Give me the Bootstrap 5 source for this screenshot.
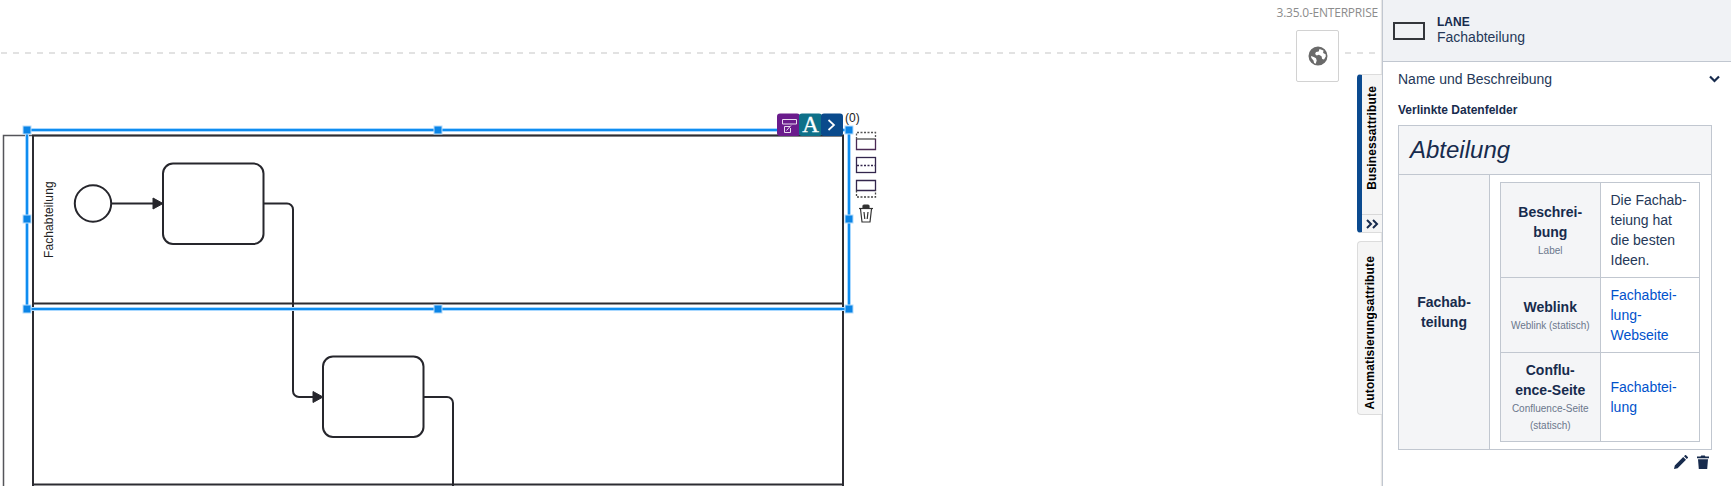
<!DOCTYPE html>
<html lang="de">
<head>
  <meta charset="UTF-8">
  <title>Fachabteilung</title>
  <link href="https://cdn.jsdelivr.net/npm/bootstrap@5.3.0/dist/css/bootstrap.min.css" rel="stylesheet">
  <style>
    html, body { height: 486px; overflow: hidden; background: #fff; }
    body { font-family: "Liberation Sans", Arial, sans-serif; font-size: 14px; line-height: 20px; color: #172b4d; }

    .app-shell { height: 486px; }

    /* canvas */
    .canvas-area { position: relative; }
    .diagram { position: absolute; left: 0; top: 0; width: 1382px; height: 486px; }
    .diagram text { font-family: "Liberation Sans", Arial, sans-serif; }

    .canvas-tools { position: absolute; right: 0; top: 0; bottom: 0; width: 110px; }
    .version-label { font-family: "Open Sans", sans-serif; font-size: 12px; letter-spacing: -.22px; line-height: 16px; color: #8c8c8c; margin: 5px 4px 0 0; white-space: nowrap; }
    .globe-btn { width: 43px; height: 52px; margin: 9px 43px 0 0; background: #fff; border: 1px solid #d2d2d2; border-radius: 2px; }

    .side-tabs { margin-top: -8px; width: 25px; gap: 8px; }
    .side-tab { width: 25px; background: #f5f5f5; border: 1px solid #dcdcdc; border-right: 0; border-radius: 4px 0 0 4px; color: #000; font-size: 12px; font-weight: 700; }
    .side-tab.is-active { height: 159px; border-left: 5px solid #0b4a8f; }
    .side-tab.is-plain { height: 174px; padding-top: 9px; }
    .tab-label { writing-mode: vertical-rl; transform: rotate(180deg); line-height: 14px; white-space: nowrap; letter-spacing: .14px; }
    .tab-main { padding-bottom: 13px; }
    .tab-toggle { height: 18px; border-top: 1px solid #d8d8d8; }

    /* right panel */
    .side-panel { width: 349px; border-left: 1px solid #c1c7d0; box-shadow: -1px 0 1px #e6e6e6; background: #fff; }
    .panel-head { height: 62px; background: #f0f2f5; border-bottom: 1px solid #c1c7d0; padding: 0 0 1px 10px; gap: 12px; }
    .lane-glyph { width: 32px; height: 18px; border: 2px solid #33363b; margin-top: 1px; }
    .head-type { font-size: 12px; font-weight: 700; line-height: 15px; }
    .head-name { font-size: 14px; line-height: 15px; color: #253858; }

    .panel-body { padding: 7px 19px 0 15px; }
    .section-title { color: #253858; height: 20px; }
    .section-chevron { margin-right: -8px; }
    .linked-title { font-size: 12px; font-weight: 700; line-height: 16px; margin: 13px 0 7px; }

    .field-table { --bs-table-bg: transparent; --bs-table-color: #253858; --bs-table-border-color: #c1c7d0; table-layout: fixed; margin: 0; }
    .outer-fields { width: 314px; }
    .inner-fields { width: 200px; }
    .field-table > tbody > tr > th,
    .field-table > tbody > tr > td { padding: 7px 10px; border: 1px solid #c1c7d0; vertical-align: middle; font-weight: 400; }
    .field-table > tbody > tr > .cell-shaded { background: #f4f5f7; text-align: center; font-weight: 700; color: #172b4d; padding-left: 2px; padding-right: 2px; }
    .field-table > tbody > tr > .cell-title { background: #f4f5f7; font-size: 24px; font-style: italic; font-weight: 400; line-height: 32px; padding: 8px 11px; height: 49px; color: #172b4d; }
    .field-table > tbody > tr > .cell-holder { padding: 7px 11px 7px 10px; }
    .field-sub { display: block; font-size: 10px; font-weight: 400; line-height: 17px; color: #6b778c; white-space: nowrap; }
    .field-link { color: #0052cc; text-decoration: none; }

    .row-actions { gap: 9px; margin-top: 5px; padding-right: 3px; }
  </style>
</head>
<body>
<div class="app-shell d-flex">

  <!-- Diagram canvas -->
  <div class="canvas-area flex-grow-1">
    <svg class="diagram" viewBox="0 0 1382 486" fill="none">
      <line x1="1" y1="53" x2="1376" y2="53" stroke="#e2e2e2" stroke-width="2" stroke-dasharray="6 6"/>

      <!-- pool and lanes -->
      <g stroke="#2c2c32" stroke-width="2">
        <path d="M3.5 486V135.5H843V486" stroke="#55555a" stroke-width="1.5"/>
        <path d="M33 486V135.5H843V486"/>
        <path d="M33 303.5H843"/>
        <path d="M33 484.5H843"/>
      </g>
      <text transform="translate(52.5 258) rotate(-90)" font-size="12" letter-spacing=".1" fill="#222">Fachabteilung</text>

      <!-- shapes -->
      <g stroke="#26262c" stroke-width="2">
        <circle cx="93" cy="203.5" r="18.2"/>
        <rect x="163" y="163.5" width="100.5" height="80.5" rx="10"/>
        <rect x="323" y="356.5" width="100.5" height="80.5" rx="10"/>
        <path d="M111 203.5H154"/>
        <path d="M263.5 203.5H287a6 6 0 0 1 6 6V391a6 6 0 0 0 6 6H314"/>
        <path d="M423.5 397H447a6 6 0 0 1 6 6V486"/>
      </g>
      <path d="M153 198V209L163 203.5Z M313 391.5V402.5L323 397Z" fill="#26262c" stroke="#26262c" stroke-width="1"/>

      <!-- selection frame -->
      <rect x="27" y="130" width="822" height="179" stroke="#a9d8ff" stroke-width="4"/>
      <rect x="27" y="130" width="822" height="179" stroke="#0f8df0" stroke-width="2"/>
      <g fill="#0a84e6" stroke="#b5dcfb" stroke-width="1">
        <rect x="23" y="126" width="8" height="8"/>
        <rect x="434" y="126" width="8" height="8"/>
        <rect x="845" y="126" width="8" height="8"/>
        <rect x="23" y="215" width="8" height="8"/>
        <rect x="845" y="215" width="8" height="8"/>
        <rect x="23" y="305" width="8" height="8"/>
        <rect x="434" y="305" width="8" height="8"/>
        <rect x="845" y="305" width="8" height="8"/>
      </g>

      <!-- context pad -->
      <rect x="777" y="113.5" width="23" height="22.5" rx="3" fill="#6a1b8c"/>
      <rect x="799" y="113.5" width="23" height="22.5" rx="3" fill="#0e7089"/>
      <rect x="821" y="113.5" width="22" height="22.5" rx="3" fill="#0a4a8c"/>
      <g stroke="#e9dcef" stroke-width="1">
        <path d="M782.5 119.5H796.5V124H782.5Z"/>
        <path d="M790 126.5H784.5V132.5H790.5V128"/>
        <path d="M786.5 130.5L791 125.5"/>
      </g>
      <text x="810.5" y="132" text-anchor="middle" font-size="23" fill="#fff" stroke="#fff" stroke-width=".3" style="font-family:'Liberation Serif',serif">A</text>
      <path d="M828.5 120L834 125L828.5 130" stroke="#fff" stroke-width="1.7"/>
      <text x="845" y="122" font-size="12" fill="#222">(0)</text>

      <!-- lane actions -->
      <g stroke-width="1.3">
        <path d="M856.5 139V132.5H875.5V139" stroke="#555" stroke-dasharray="2 1.5"/>
        <path d="M856.5 139H875.5" stroke="#666" stroke-width="1.5"/>
        <path d="M856.5 139V149.5H875.5V139" stroke="#4b2a55"/>
        <rect x="856.5" y="157.5" width="19" height="15" stroke="#33264d"/>
        <path d="M857 165.5H875" stroke="#33264d" stroke-dasharray="2 1.5"/>
        <path d="M856.5 190.5V180.5H875.5V190.5Z" stroke="#33264d"/>
        <path d="M856.5 190.5V197H875.5V190.5" stroke="#444" stroke-dasharray="2 1.5"/>
      </g>
      <g stroke="#333" stroke-width="1.2">
        <path d="M859 208.5H873"/>
        <path d="M863 208V206a1 1 0 0 1 1-1H868a1 1 0 0 1 1 1V208" fill="#333"/>
        <path d="M860.5 209L862 222H870L871.5 209"/>
        <path d="M864 212L864.8 219M868 212L867.2 219"/>
      </g>
    </svg>

    <!-- Tools over the canvas -->
    <div class="canvas-tools d-flex flex-column align-items-end">
      <div class="version-label">3.35.0-ENTERPRISE</div>
      <div class="globe-btn d-flex align-items-center justify-content-center">
        <svg width="20" height="20" viewBox="0 0 20 20">
          <path fill="#6a6a6a" fill-rule="evenodd" d="M10 .5a9.5 9.5 0 1 0 0 19 9.5 9.5 0 0 0 0-19ZM11.5 3l4 1.5-.4 2.4 2.5 1.3.2 2.2-1.8 3-1.8-.5-.7-2.6-2.6-1.6-2.2.8-1.6-1.4.9-2.2 2.7-.3ZM3 10l2.8 1 2.2 1.2.7 2.2-1 3.3-1.6-.7-.6-2.4L3.4 12Z"/>
        </svg>
      </div>
      <div class="side-tabs d-flex flex-column align-self-end">
        <div class="side-tab is-active d-flex flex-column">
          <div class="tab-main flex-grow-1 d-flex align-items-center justify-content-center"><span class="tab-label">Businessattribute</span></div>
          <div class="tab-toggle d-flex align-items-center justify-content-center">
            <svg width="13" height="10" viewBox="0 0 13 10" fill="none" stroke="#172b4d" stroke-width="2"><path d="M1 1l4 4-4 4M7 1l4 4-4 4"/></svg>
          </div>
        </div>
        <div class="side-tab is-plain d-flex align-items-center justify-content-center"><span class="tab-label">Automatisierungsattribute</span></div>
      </div>
    </div>
  </div>

  <!-- Properties panel -->
  <aside class="side-panel flex-shrink-0">
    <div class="panel-head d-flex align-items-center">
      <div class="lane-glyph"></div>
      <div>
        <div class="head-type">LANE</div>
        <div class="head-name">Fachabteilung</div>
      </div>
    </div>

    <div class="panel-body">
      <div class="section-title d-flex justify-content-between align-items-center">
        <span>Name und Beschreibung</span>
        <svg class="section-chevron" width="11" height="8" viewBox="0 0 11 8" fill="none" stroke="#172b4d" stroke-width="2.2"><path d="M1 1.5l4.5 4.5L10 1.5"/></svg>
      </div>
      <div class="linked-title">Verlinkte Datenfelder</div>

      <table class="table table-bordered field-table outer-fields">
        <colgroup><col style="width:91px"><col></colgroup>
        <tbody>
          <tr><th colspan="2" class="cell-title">Abteilung</th></tr>
          <tr>
            <th class="cell-shaded">Fachab-<br>teilung</th>
            <td class="cell-holder">
              <table class="table table-bordered field-table inner-fields">
                <tbody>
                  <tr>
                    <th class="cell-shaded">Beschrei-<br>bung<span class="field-sub">Label</span></th>
                    <td>Die Fachab-<br>teiung hat<br>die besten<br>Ideen.</td>
                  </tr>
                  <tr>
                    <th class="cell-shaded">Weblink<span class="field-sub">Weblink (statisch)</span></th>
                    <td><a class="field-link" href="#">Fachabtei-<br>lung-<br>Webseite</a></td>
                  </tr>
                  <tr>
                    <th class="cell-shaded">Conflu-<br>ence-Seite<span class="field-sub">Confluence-Seite<br>(statisch)</span></th>
                    <td><a class="field-link" href="#">Fachabtei-<br>lung</a></td>
                  </tr>
                </tbody>
              </table>
            </td>
          </tr>
        </tbody>
      </table>

      <div class="row-actions d-flex justify-content-end align-items-center">
        <svg width="14" height="14" viewBox="0 0 14 14" fill="#172b4d"><path d="M0 14l.8-3.6L9.2 2l2.8 2.8-8.4 8.4ZM10 1.2l1-1a.8.8 0 0 1 1.1 0l1.7 1.7a.8.8 0 0 1 0 1.1l-1 1Z"/></svg>
        <svg width="12" height="14" viewBox="0 0 12 14" fill="#172b4d"><path d="M0 1.6h3.6L4.2.4h3.6l.6 1.2H12v1.6H0ZM1 4.2h10l-.8 9.8H1.8Z"/></svg>
      </div>
    </div>
  </aside>
</div>

<script src="https://cdn.jsdelivr.net/npm/bootstrap@5.3.0/dist/js/bootstrap.bundle.min.js"></script>
</body>
</html>
